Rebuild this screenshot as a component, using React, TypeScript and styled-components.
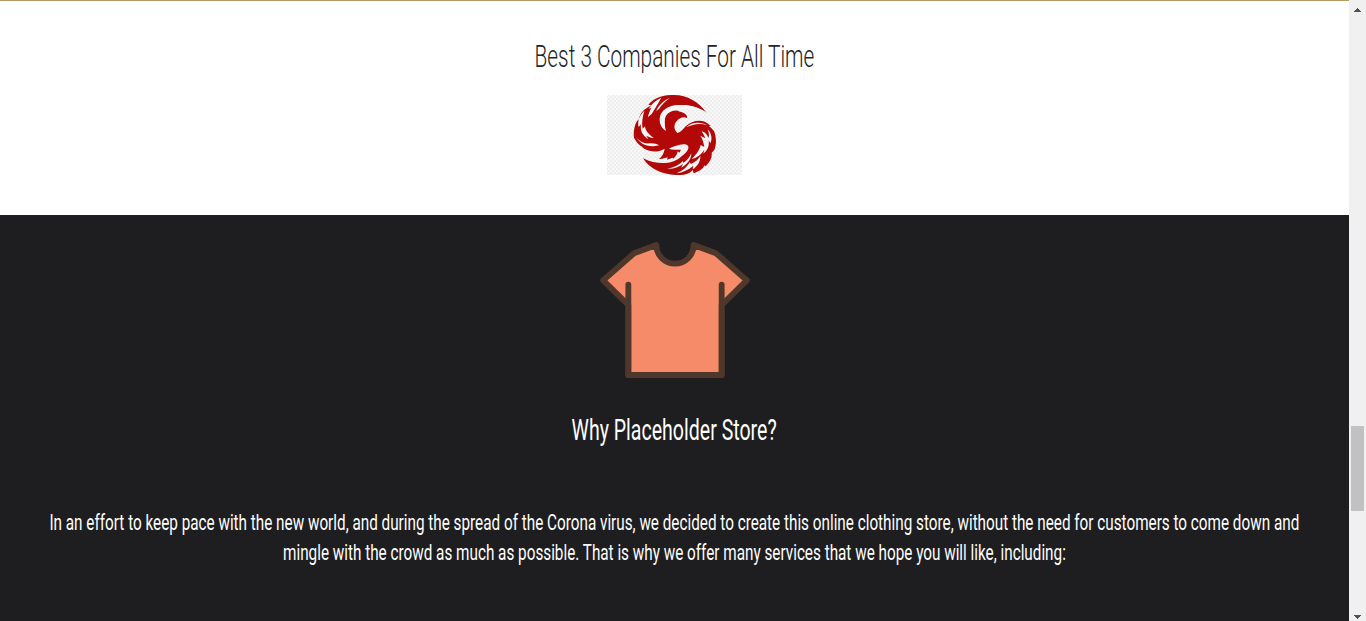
import React from 'react';
import styled, { createGlobalStyle } from 'styled-components';

const GlobalStyle = createGlobalStyle`
  * { box-sizing: border-box; }
  body { margin: 0; overflow: hidden; font-family: Roboto, "Liberation Sans", sans-serif; }
`;

const Page = styled.div`
  display: flex;
  width: 1366px;
  height: 621px;
  overflow: hidden;
`;

const Content = styled.main`
  width: 1349px;
  height: 621px;
  overflow: hidden;
  background: #1e1e20;
`;

const Companies = styled.section`
  height: 215px;
  padding-top: 38px;
  display: flex;
  flex-direction: column;
  align-items: center;
  background: #fff;
  border-top: 1px solid #b79a66;
`;

const About = styled.section`
  display: flex;
  flex-direction: column;
  align-items: center;
  padding-top: 15px;
  color: #fff;
`;

const Heading = styled.h2<{ $size: number; $color: string; $weight: number }>`
  display: flex;
  justify-content: center;
  margin: 0;
  height: 36px;
  line-height: 36px;
  font-size: ${(p) => p.$size}px;
  font-weight: ${(p) => p.$weight};
  color: ${(p) => p.$color};
`;

const Condensed = styled.span<{ $scale: number }>`
  flex: none;
  white-space: nowrap;
  transform: scaleX(${(p) => p.$scale});
`;

const Logo = styled.svg`
  display: block;
  width: 135px;
  height: 80px;
  margin-top: 20px;
`;

const Shirt = styled.svg`
  display: block;
  width: 170px;
  height: 155px;
  margin-bottom: 27px;
`;

const Paragraph = styled.p`
  width: 1349px;
  margin: 59px 0 0;
  font-size: 22.5px;
  line-height: 30px;
`;

const Line = styled.span`
  display: flex;
  justify-content: center;
`;

const Scrollbar = styled.div`
  width: 17px;
  height: 621px;
  display: flex;
  flex-direction: column;
  align-items: center;
  justify-content: space-between;
  padding: 8px 0 2px;
  background: #f0f0f0;
`;

const Arrow = styled.svg`
  display: block;
  width: 7px;
  height: 4px;
`;

const Thumb = styled.div`
  width: 13px;
  height: 85px;
  margin: 413px 0 103px;
  flex: none;
  background: #c1c1c1;
`;

const Phoenix = () => (
  <Logo viewBox="21 15 405 240" aria-label="Phoenix">
    <defs>
      <pattern id="checks" width="12" height="12" patternUnits="userSpaceOnUse">
        <rect width="12" height="12" fill="#f7f7f7" />
        <path d="M0 0H6V6H0ZM6 6H12V12H6Z" fill="#eeeeee" />
      </pattern>
    </defs>
    <rect x="21" y="15" width="405" height="240" fill="url(#checks)" />
    <g fill="#b30808">
      <path d="M319 68C298 37 262 15 222 15C180 14 158 28 145 45L155 46C128 58 120 72 117 88C105 95 99 125 102 143C112 161 121 169 136 174L124 169C139 186 170 190 194 176C192 190 186 199 177 207C188 208 196 203 203 202L201 209L218 203L220 206C228 199 233 190 233 184L238 188L243 179C230 178 216 180 207 176C225 167 252 157 264 167C270 179 254 192 243 200C220 221 177 228 129 205C151 241 195 257 244 255C262 253 270 249 278 240L281 250C299 243 309 237 314 226L317 229C330 216 337 203 335 188L343 180C351 159 348 139 342 123C336 116 331 110 326 107L332 108C313 86 279 88 257 109C248 119 241 128 232 129C220 119 221 102 231 92C239 84 250 79 261 84C264 76 252 66 240 65C228 57 207 63 198 77C191 91 194 109 197 122C183 114 174 93 182 75C196 43 268 31 319 68Z" />
    </g>
    <g fill="#f6f6f6">
      <path d="M184 23C166 31 153 44 146 57L154 53C149 64 145 72 144 81L155 72C170 48 177 36 184 23Z" />
      <path d="M210 24C191 31 178 44 168 63L177 57C185 45 195 34 210 24Z" />
      <path d="M180 92C177 68 196 51 224 46C255 42 293 49 319 68C288 56 250 54 224 60C205 64 196 73 194 88C193 99 195 111 197 122C188 117 182 104 180 92Z" />
      <path d="M133 62C117 78 112 95 116 111L123 103C120 124 128 136 145 148L139 137C148 141 156 144 161 144C145 132 136 122 135 109L128 116C124 99 128 81 133 62Z" />
      <path d="M104 133C111 151 129 162 150 160C161 159 170 162 178 166L160 169C137 170 116 160 104 133Z" />
      <path d="M323 117C336 132 337 148 331 160L326 151C329 171 320 184 310 191L313 179C303 194 289 204 275 207C292 190 300 177 302 165L313 171C310 156 307 145 301 137L316 145C313 136 308 129 305 124C317 127 323 136 325 144C329 135 326 126 323 117Z" />
      <path d="M301 198C302 214 292 230 278 238L280 227C265 240 248 247 230 250C250 241 261 231 269 217L273 222C287 216 295 208 301 198Z" />
      <path d="M274 190C275 206 262 223 244 233L249 222C236 232 220 237 202 236C223 232 239 224 249 213L250 219C262 211 269 202 274 190Z" />
      <path d="M258 112C278 94 305 96 322 106C299 98 280 102 258 112Z" />
    </g>
  </Logo>
);

const TShirt = () => (
  <Shirt viewBox="0 0 510 465" aria-label="T-shirt">
    <path
      d="M115 225L39.500 151L132 70L199 45A56 56 0 0 0 311 45L378 70L470.500 151L395 225V435H115Z"
      fill="#f58b69"
      stroke="#4f382b"
      strokeWidth="17.500"
      strokeLinejoin="round"
    />
    <path d="M115 164V435H395V164" fill="none" stroke="#4f382b" strokeWidth="17.500" strokeLinecap="round" strokeLinejoin="round" />
  </Shirt>
);

export default function App() {
  return (
    <Page>
      <GlobalStyle />
      <Content>
        <Companies>
          <Heading $size={31} $color="#212529" $weight={300}>
            <Condensed $scale={0.671}>Best 3 Companies For All Time</Condensed>
          </Heading>
          <Phoenix />
        </Companies>
        <About>
          <TShirt />
          <Heading $size={29} $color="#fff" $weight={400}>
            <Condensed $scale={0.674}>Why Placeholder Store?</Condensed>
          </Heading>
          <Paragraph>
            <Line>
              <Condensed $scale={0.679}>
                In an effort to keep pace with the new world, and during the spread of the Corona virus, we decided to create this online clothing store, without the need for customers to come down and
              </Condensed>
            </Line>
            <Line>
              <Condensed $scale={0.679}>
                mingle with the crowd as much as possible. That is why we offer many services that we hope you will like, including:
              </Condensed>
            </Line>
          </Paragraph>
        </About>
      </Content>
      <Scrollbar>
        <Arrow viewBox="0 0 7 4"><path d="M3 0H4V1H5V2H6V3H7V4H0V3H1V2H2V1H3Z" fill="#505050" /></Arrow>
        <Thumb />
        <Arrow viewBox="0 0 7 4"><path d="M0 0H7V1H6V2H5V3H4V4H3V3H2V2H1V1H0Z" fill="#505050" /></Arrow>
      </Scrollbar>
    </Page>
  );
}
